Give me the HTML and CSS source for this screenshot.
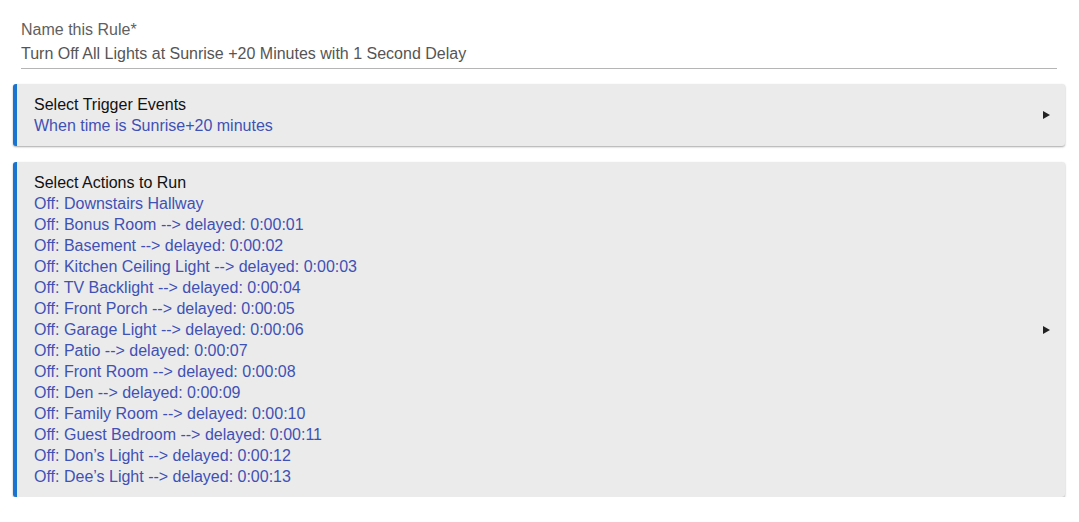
FILE: index.html
```html
<!DOCTYPE html>
<html>
<head>
<meta charset="utf-8">
<link rel="stylesheet" href="styles.css">
</head>
<body>
<div class="page">
  <div class="field">
    <div class="field-label">Name this Rule*</div>
    <div class="field-value">Turn Off All Lights at Sunrise +20 Minutes with 1 Second Delay</div>
  </div>

  <div class="card card-trigger">
    <div class="card-body">
      <div class="card-title">Select Trigger Events</div>
      <div class="card-line">When time is Sunrise+20 minutes</div>
    </div>
    <span class="arrow"></span>
  </div>

  <div class="card card-actions">
    <div class="card-body">
      <div class="card-title">Select Actions to Run</div>
      <div class="card-line">Off: Downstairs Hallway</div>
      <div class="card-line">Off: Bonus Room --&gt; delayed: 0:00:01</div>
      <div class="card-line">Off: Basement --&gt; delayed: 0:00:02</div>
      <div class="card-line">Off: Kitchen Ceiling Light --&gt; delayed: 0:00:03</div>
      <div class="card-line">Off: TV Backlight --&gt; delayed: 0:00:04</div>
      <div class="card-line">Off: Front Porch --&gt; delayed: 0:00:05</div>
      <div class="card-line">Off: Garage Light --&gt; delayed: 0:00:06</div>
      <div class="card-line">Off: Patio --&gt; delayed: 0:00:07</div>
      <div class="card-line">Off: Front Room --&gt; delayed: 0:00:08</div>
      <div class="card-line">Off: Den --&gt; delayed: 0:00:09</div>
      <div class="card-line">Off: Family Room --&gt; delayed: 0:00:10</div>
      <div class="card-line">Off: Guest Bedroom --&gt; delayed: 0:00:11</div>
      <div class="card-line">Off: Don’s Light --&gt; delayed: 0:00:12</div>
      <div class="card-line">Off: Dee’s Light --&gt; delayed: 0:00:13</div>
    </div>
    <span class="arrow"></span>
  </div>
</div>
</body>
</html>
```

FILE: styles.css
```css
html, body {
  margin: 0;
  padding: 0;
  background: #ffffff;
}

body {
  font-family: "Liberation Sans", Arial, sans-serif;
  font-size: 16px;
}

.page {
  padding: 19px 14px 0 13px;
  display: flex;
  flex-direction: column;
}

.field {
  margin: 0 8px 0 8px;
  padding-bottom: 2px;
  border-bottom: 1px solid #b5b5b5;
}

.field-label {
  color: #5f5f5f;
  line-height: 22px;
}

.field-value {
  color: #555555;
  line-height: 24px;
  padding-top: 1px;
}

.card {
  display: flex;
  align-items: center;
  background: #ebebeb;
  border-left: 4px solid #1a73cf;
  border-radius: 3px;
  box-shadow: 0 1px 2px rgba(0, 0, 0, 0.35);
  padding: 10px 0 10px 17px;
}

.card-trigger {
  margin-top: 15px;
}

.card-actions {
  margin-top: 16px;
}

.card-body {
  flex: 1;
}

.card-title {
  color: #111111;
  line-height: 21px;
}

.card-line {
  color: #3f51b5;
  line-height: 21px;
}

.arrow {
  width: 0;
  height: 0;
  border-top: 4px solid transparent;
  border-bottom: 4px solid transparent;
  border-left: 7px solid #222222;
  margin-right: 15px;
}
```
